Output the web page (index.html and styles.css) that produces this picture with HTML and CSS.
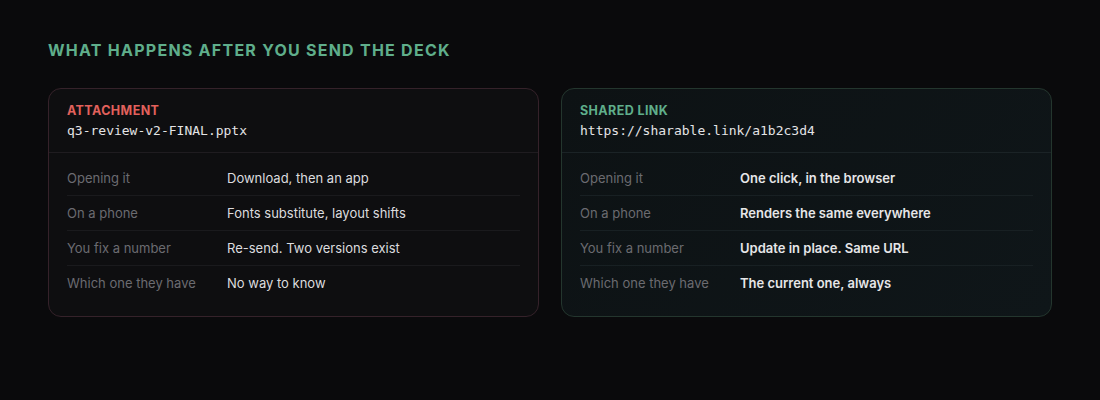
FILE: index.html
```html
<!DOCTYPE html>
<html lang="en">
<head>
<meta charset="utf-8">
<link rel="stylesheet" href="styles.css">
</head>
<body>
<main class="page">
  <h2 class="title">WHAT HAPPENS AFTER YOU SEND THE DECK</h2>
  <div class="cards">
    <section class="card card-bad">
      <header class="card-head">
        <div class="tag">ATTACHMENT</div>
        <div class="mono">q3-review-v2-FINAL.pptx</div>
      </header>
      <div class="rows">
        <div class="row"><span class="k">Opening it</span><span class="v">Download, then an app</span></div>
        <div class="row"><span class="k">On a phone</span><span class="v">Fonts substitute, layout shifts</span></div>
        <div class="row"><span class="k">You fix a number</span><span class="v">Re-send. Two versions exist</span></div>
        <div class="row"><span class="k">Which one they have</span><span class="v">No way to know</span></div>
      </div>
    </section>
    <section class="card card-good">
      <header class="card-head">
        <div class="tag">SHARED LINK</div>
        <div class="mono">https://sharable.link/a1b2c3d4</div>
      </header>
      <div class="rows">
        <div class="row"><span class="k">Opening it</span><span class="v">One click, in the browser</span></div>
        <div class="row"><span class="k">On a phone</span><span class="v">Renders the same everywhere</span></div>
        <div class="row"><span class="k">You fix a number</span><span class="v">Update in place. Same URL</span></div>
        <div class="row"><span class="k">Which one they have</span><span class="v">The current one, always</span></div>
      </div>
    </section>
  </div>
</main>
</body>
</html>
```
FILE: styles.css
```css
html, body {
  margin: 0;
  padding: 0;
  background: #0a0a0c;
  font-family: Inter, "Noto Sans", sans-serif;
  color: #e4e4e6;
}
.page {
  padding: 39px 48px 0 48px;
}
.title {
  margin: 0 0 27px 0;
  font-size: 16px;
  line-height: 22px;
  font-weight: 700;
  letter-spacing: 1.25px;
  color: #5fae8b;
}
.cards {
  display: grid;
  grid-template-columns: 1fr 1fr;
  gap: 22px;
}
.card {
  border-radius: 13px;
  border: 1px solid #35222a;
  background: #0e0e10;
  overflow: hidden;
}
.card-good {
  border-color: #24362e;
  background: linear-gradient(135deg, #0d1214 0%, #0f1619 100%);
}
.card-head {
  padding: 14px 18px 12px 18px;
  border-bottom: 1px solid #1f1c20;
}
.card-good .card-head {
  border-bottom-color: #1b2326;
}
.tag {
  font-size: 12.5px;
  line-height: 16px;
  font-weight: 700;
  letter-spacing: 0.4px;
  color: #e2615c;
}
.card-good .tag {
  color: #5fae8b;
}
.mono {
  margin-top: 3px;
  font-family: "DejaVu Sans Mono", monospace;
  font-size: 13px;
  line-height: 18px;
  color: #e4e4e6;
}
.rows {
  padding: 7px 18px 16px 18px;
}
.row {
  display: grid;
  grid-template-columns: 160px 1fr;
  height: 35px;
  align-items: center;
  font-size: 13px;
  border-top: 1px solid #1a1a1d;
  box-sizing: border-box;
}
.card-good .row {
  border-top-color: #182023;
}
.row:first-child {
  border-top: none;
}
.k {
  color: #6b6b70;
}
.v {
  color: #dcdcdf;
}
.card-good .v {
  font-weight: 600;
  color: #e6e6e8;
}
```
